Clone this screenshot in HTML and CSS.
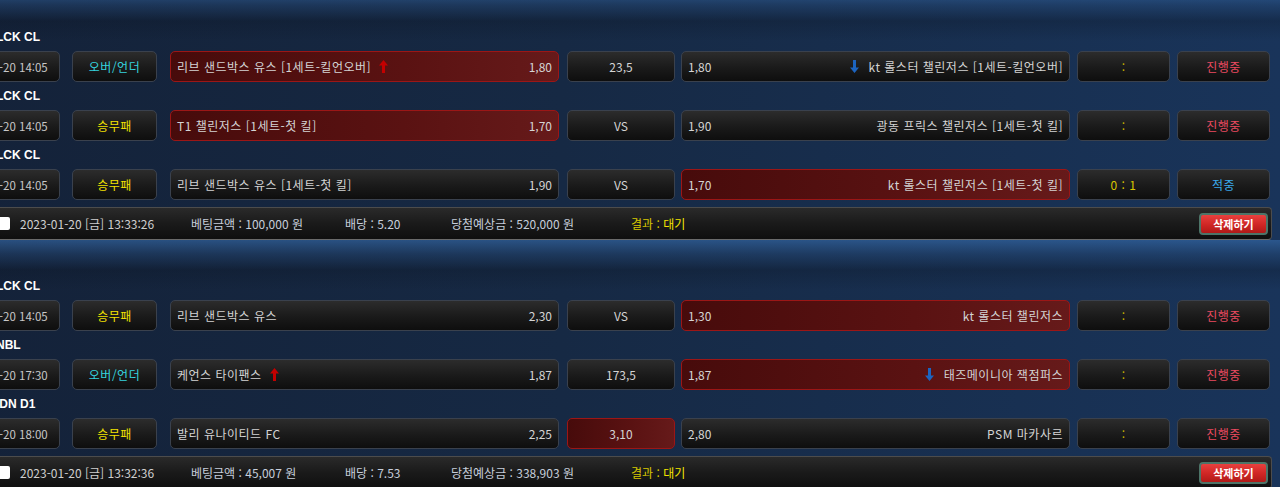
FILE: index.html
```html
<!DOCTYPE html>
<html lang="ko">
<head>
    <meta charset="UTF-8">
    <meta name="viewport" content="width=device-width, initial-scale=1.0">
    <title>베팅내역</title>
    <link rel="stylesheet" href="styles.css">
</head>
<body>
<div id="bet-list">

    <!-- Bet slip 1 -->
    <div class="bet-block">
        <div class="game">
            <div class="league">LCK CL</div>
            <div class="cells">
                <div class="cell date">01-20 14:05</div>
                <div class="cell type ou">오버/언더</div>
                <div class="cell team home picked">
                    <span class="name">리브 샌드박스 유스 [1세트-킬언오버]
                        <svg class="arrow" width="9" height="13" viewBox="0 0 9 13"><path d="M4.5 0 L9 5.5 L6 5.5 L6 13 L3 13 L3 5.5 L0 5.5 Z" fill="#c40000"/></svg>
                    </span>
                    <span class="odds">1,80</span>
                </div>
                <div class="cell mid">23,5</div>
                <div class="cell team away">
                    <span class="odds">1,80</span>
                    <span class="name">
                        <svg class="arrow" width="9" height="13" viewBox="0 0 9 13"><path d="M4.5 13 L9 7.5 L6 7.5 L6 0 L3 0 L3 7.5 L0 7.5 Z" fill="#1c64c0"/></svg>
                        kt 롤스터 챌린저스 [1세트-킬언오버]</span>
                </div>
                <div class="cell score">:</div>
                <div class="cell status live">진행중</div>
            </div>
        </div>
        <div class="game">
            <div class="league">LCK CL</div>
            <div class="cells">
                <div class="cell date">01-20 14:05</div>
                <div class="cell type wdl">승무패</div>
                <div class="cell team home picked">
                    <span class="name">T1 챌린저스 [1세트-첫 킬]</span>
                    <span class="odds">1,70</span>
                </div>
                <div class="cell mid">VS</div>
                <div class="cell team away">
                    <span class="odds">1,90</span>
                    <span class="name">광동 프릭스 챌린저스 [1세트-첫 킬]</span>
                </div>
                <div class="cell score">:</div>
                <div class="cell status live">진행중</div>
            </div>
        </div>
        <div class="game">
            <div class="league">LCK CL</div>
            <div class="cells">
                <div class="cell date">01-20 14:05</div>
                <div class="cell type wdl">승무패</div>
                <div class="cell team home">
                    <span class="name">리브 샌드박스 유스 [1세트-첫 킬]</span>
                    <span class="odds">1,90</span>
                </div>
                <div class="cell mid">VS</div>
                <div class="cell team away picked">
                    <span class="odds">1,70</span>
                    <span class="name">kt 롤스터 챌린저스 [1세트-첫 킬]</span>
                </div>
                <div class="cell score final">0 : 1</div>
                <div class="cell status hit">적중</div>
            </div>
        </div>
        <div class="summary">
            <span class="check"></span>
            <span class="s-date">2023-01-20 [금] 13:33:26</span>
            <span class="s-amount">베팅금액 : 100,000 원</span>
            <span class="s-rate">배당 : 5.20</span>
            <span class="s-win">당첨예상금 : 520,000 원</span>
            <span class="s-result">결과 : <b>대기</b></span>
            <button type="button" class="btn-delete">삭제하기</button>
        </div>
    </div>

    <!-- Bet slip 2 -->
    <div class="bet-block">
        <div class="game">
            <div class="league">LCK CL</div>
            <div class="cells">
                <div class="cell date">01-20 14:05</div>
                <div class="cell type wdl">승무패</div>
                <div class="cell team home">
                    <span class="name">리브 샌드박스 유스</span>
                    <span class="odds">2,30</span>
                </div>
                <div class="cell mid">VS</div>
                <div class="cell team away picked">
                    <span class="odds">1,30</span>
                    <span class="name">kt 롤스터 챌린저스</span>
                </div>
                <div class="cell score">:</div>
                <div class="cell status live">진행중</div>
            </div>
        </div>
        <div class="game">
            <div class="league">NBL</div>
            <div class="cells">
                <div class="cell date">01-20 17:30</div>
                <div class="cell type ou">오버/언더</div>
                <div class="cell team home">
                    <span class="name">케언스 타이팬스
                        <svg class="arrow" width="9" height="13" viewBox="0 0 9 13"><path d="M4.5 0 L9 5.5 L6 5.5 L6 13 L3 13 L3 5.5 L0 5.5 Z" fill="#c40000"/></svg>
                    </span>
                    <span class="odds">1,87</span>
                </div>
                <div class="cell mid">173,5</div>
                <div class="cell team away picked">
                    <span class="odds">1,87</span>
                    <span class="name">
                        <svg class="arrow" width="9" height="13" viewBox="0 0 9 13"><path d="M4.5 13 L9 7.5 L6 7.5 L6 0 L3 0 L3 7.5 L0 7.5 Z" fill="#1c64c0"/></svg>
                        태즈메이니아 잭점퍼스</span>
                </div>
                <div class="cell score">:</div>
                <div class="cell status live">진행중</div>
            </div>
        </div>
        <div class="game">
            <div class="league">IDN D1</div>
            <div class="cells">
                <div class="cell date">01-20 18:00</div>
                <div class="cell type wdl">승무패</div>
                <div class="cell team home">
                    <span class="name">발리 유나이티드 FC</span>
                    <span class="odds">2,25</span>
                </div>
                <div class="cell mid picked">3,10</div>
                <div class="cell team away">
                    <span class="odds">2,80</span>
                    <span class="name">PSM 마카사르</span>
                </div>
                <div class="cell score">:</div>
                <div class="cell status live">진행중</div>
            </div>
        </div>
        <div class="summary">
            <span class="check"></span>
            <span class="s-date">2023-01-20 [금] 13:32:36</span>
            <span class="s-amount">베팅금액 : 45,007 원</span>
            <span class="s-rate">배당 : 7.53</span>
            <span class="s-win">당첨예상금 : 338,903 원</span>
            <span class="s-result">결과 : <b>대기</b></span>
            <button type="button" class="btn-delete">삭제하기</button>
        </div>
    </div>

</div>
</body>
</html>
```

FILE: styles.css
```css
/* Page */
body {
    margin: 0;
    background: #152439;
    font-family: "Noto Sans CJK KR", "Noto Sans", sans-serif;
    font-size: 12px;
    color: #d6d6d6;
    overflow: hidden;
}

#bet-list {
    margin-top: -9px;
    margin-left: -26px;
}

/* One bet slip with its glow on top */
.bet-block {
    padding-top: 32px;
    background:
        linear-gradient(180deg, rgba(55, 110, 175, 0.6) 0, rgba(40, 80, 130, 0.4) 14px, rgba(10, 20, 35, 0.25) 30px, rgba(0, 0, 0, 0) 50px),
        linear-gradient(90deg, #142239 0%, #162944 45%, #19345a 100%);
}

/* Game rows */
.league {
    height: 28px;
    line-height: 29px;
    padding-left: 22px;
    font-family: "Liberation Sans", Arial, sans-serif;
    font-weight: bold;
    font-size: 12px;
    color: #ffffff;
}

.cells {
    display: flex;
    height: 31px;
}

.cell {
    box-sizing: border-box;
    height: 31px;
    border: 1px solid #3a414d;
    border-radius: 5px;
    background: linear-gradient(180deg, #2c2c2c 0%, #1a1a1a 55%, #0e0e0e 100%);
    display: flex;
    align-items: center;
    justify-content: center;
    color: #d4d4d4;
    white-space: nowrap;
}

.cell.picked {
    border-color: #9c1616;
    background: linear-gradient(90deg, #470b0b 0%, #5a1212 60%, #661a1a 100%);
}

.date {
    width: 86px;
    color: #c8c8c8;
    font-size: 11.5px;
}

.type {
    width: 85px;
    margin-left: 12px;
    letter-spacing: 0.5px;
}

.type.ou {
    color: #35d3df;
}

.type.wdl {
    color: #f2e300;
}

.team {
    width: 389px;
    justify-content: space-between;
    padding: 0 6px;
}

.home {
    margin-left: 13px;
}

.away {
    margin-left: 6px;
}

.mid {
    width: 108px;
    margin-left: 8px;
}

.name {
    display: flex;
    align-items: center;
    letter-spacing: 0.5px;
}

.home .arrow {
    margin-left: 8px;
}

.away .arrow {
    margin-right: 10px;
}

.score {
    width: 93px;
    margin-left: 7px;
    color: #c4b000;
}

.score.final {
    color: #d8c400;
    letter-spacing: 0.5px;
}

.status {
    width: 93px;
    margin-left: 7px;
    letter-spacing: 0.5px;
}

.status.live {
    color: #ec4a60;
}

.status.hit {
    color: #3aa9ec;
}

/* Slip summary bar */
.summary {
    box-sizing: border-box;
    display: flex;
    align-items: center;
    width: 1298px;
    height: 33px;
    margin-top: 7px;
    border: 1px solid #4c4c4c;
    border-bottom-color: #6a6a6a;
    border-radius: 4px;
    background: linear-gradient(180deg, #2a2a2a 0%, #1a1a1a 50%, #0f0f0f 100%);
    color: #c6cedb;
}

.check {
    width: 13px;
    height: 13px;
    margin-left: 22px;
    background: #ffffff;
    border-radius: 2px;
}

.s-date {
    width: 171px;
    margin-left: 10px;
    color: #cfcfcf;
}

.s-amount {
    width: 154px;
}

.s-rate {
    width: 106px;
}

.s-win {
    width: 180px;
}

.s-result {
    color: #d6c800;
}

.s-result b {
    font-weight: normal;
    color: #f3e400;
}

.btn-delete {
    margin-left: auto;
    margin-right: 3px;
    width: 69px;
    height: 22px;
    padding: 0;
    border: 2px solid #4d7468;
    border-radius: 4px;
    background: linear-gradient(180deg, #e8403e 0%, #cf2624 55%, #b01a18 100%);
    color: #ffffff;
    font-family: "Noto Sans CJK KR", sans-serif;
    font-size: 11px;
    font-weight: bold;
}
```
